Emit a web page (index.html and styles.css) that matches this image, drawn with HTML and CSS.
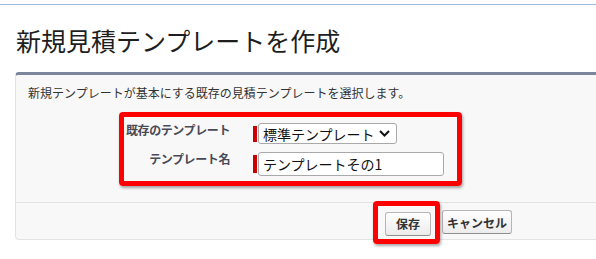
FILE: index.html
```html
<!DOCTYPE html>
<html lang="ja">
<head>
    <meta charset="UTF-8">
    <title>新規見積テンプレートを作成</title>
    <link rel="stylesheet" href="styles.css">
</head>
<body>
    <div class="topline"></div>
    <h1 class="page-title">新規見積テンプレートを作成</h1>

    <div class="panel">
        <div class="panel-body">
            <p class="description">新規テンプレートが基本にする既存の見積テンプレートを選択します。</p>

            <div class="mark form-mark">
                <div class="row">
                    <label class="field-label">既存のテンプレート</label>
                    <div class="field">
                        <span class="required"></span>
                        <div class="select">
                            <span>標準テンプレート</span>
                            <svg class="chevron" width="11" height="7" viewBox="0 0 11 7">
                                <path d="M1 1 L5.5 5.5 L10 1" fill="none" stroke="#111" stroke-width="2"/>
                            </svg>
                        </div>
                    </div>
                </div>
                <div class="row second">
                    <label class="field-label">テンプレート名</label>
                    <div class="field">
                        <span class="required tall"></span>
                        <div class="text-input">テンプレートその1</div>
                    </div>
                </div>
            </div>
        </div>

        <div class="panel-footer">
            <div class="mark button-mark">
                <button class="btn save">保存</button>
            </div>
            <button class="btn cancel">キャンセル</button>
        </div>
    </div>
</body>
</html>
```

FILE: styles.css
```css
html, body {
    margin: 0;
    height: 100%;
    overflow: hidden;
}
body {
    font-family: "Noto Sans CJK JP", "Noto Sans", sans-serif;
    background: #fff;
    color: #222;
}
.topline {
    margin-top: 4px;
    height: 1px;
    background: #9fb8de;
}
.page-title {
    margin: 0;
    padding: 20px 0 0 16px;
    height: 47px;
    font-size: 25px;
    line-height: 30px;
    font-weight: normal;
    color: #1e1e1e;
}
.panel {
    margin-left: 15px;
    background: #f8f8f8;
    border: 1px solid #e3e3e3;
    border-right: none;
    border-top: 3px solid #7b859b;
    border-radius: 4px 0 0 4px;
}
.panel-body {
    padding: 10px 0 0 12px;
    height: 117px;
}
.description {
    margin: 0;
    font-size: 12px;
    line-height: 16px;
    color: #333;
}
.mark {
    border: 5px solid #ff0000;
    border-radius: 4px;
    box-shadow: 1px 2px 3px rgba(0,0,0,0.35);
}
.form-mark {
    margin: 11px 0 0 91px;
    width: 333px;
    height: 64px;
}
.row {
    display: flex;
    align-items: flex-start;
    margin-top: 6px;
}
.row.second {
    margin-top: 8px;
}
.field-label {
    width: 106px;
    text-align: right;
    white-space: nowrap;
    font-size: 12px;
    line-height: 14px;
    font-weight: bold;
    letter-spacing: -0.4px;
    color: #4a4a56;
}
.field {
    display: flex;
    align-items: flex-start;
    margin-left: 23px;
}
.required {
    width: 4px;
    height: 16px;
    margin-top: 3px;
    margin-right: 1px;
    background: #c00;
}
.required.tall {
    height: 18px;
}
.select {
    box-sizing: border-box;
    width: 139px;
    height: 21px;
    display: flex;
    align-items: center;
    justify-content: space-between;
    padding: 0 6px 0 4px;
    background: #fff;
    border: 1px solid #a9a9a9;
    border-radius: 3px;
    font-size: 14px;
    color: #111;
}
.chevron {
    display: block;
}
.text-input {
    box-sizing: border-box;
    width: 186px;
    height: 24px;
    padding: 0 4px;
    line-height: 22px;
    background: #fff;
    border: 1px solid #a9a9a9;
    border-radius: 3px;
    font-size: 14px;
    color: #111;
}
.panel-footer {
    display: flex;
    align-items: flex-start;
    height: 36px;
    padding-left: 357px;
    border-top: 1px solid #e2e2e2;
}
.button-mark {
    position: relative;
    z-index: 1;
    margin-top: -2px;
    padding: 4px 4px 3px 7px;
}
.btn {
    box-sizing: border-box;
    height: 24px;
    padding: 0;
    font-family: inherit;
    font-size: 12px;
    font-weight: bold;
    color: #333;
    background: linear-gradient(#ffffff, #ececec);
    border: 1px solid #b5b5b5;
    border-bottom-color: #8f8f8f;
    border-radius: 3px;
}
.save {
    width: 46px;
}
.cancel {
    width: 70px;
    margin: 7px 0 0 2px;
}
```
